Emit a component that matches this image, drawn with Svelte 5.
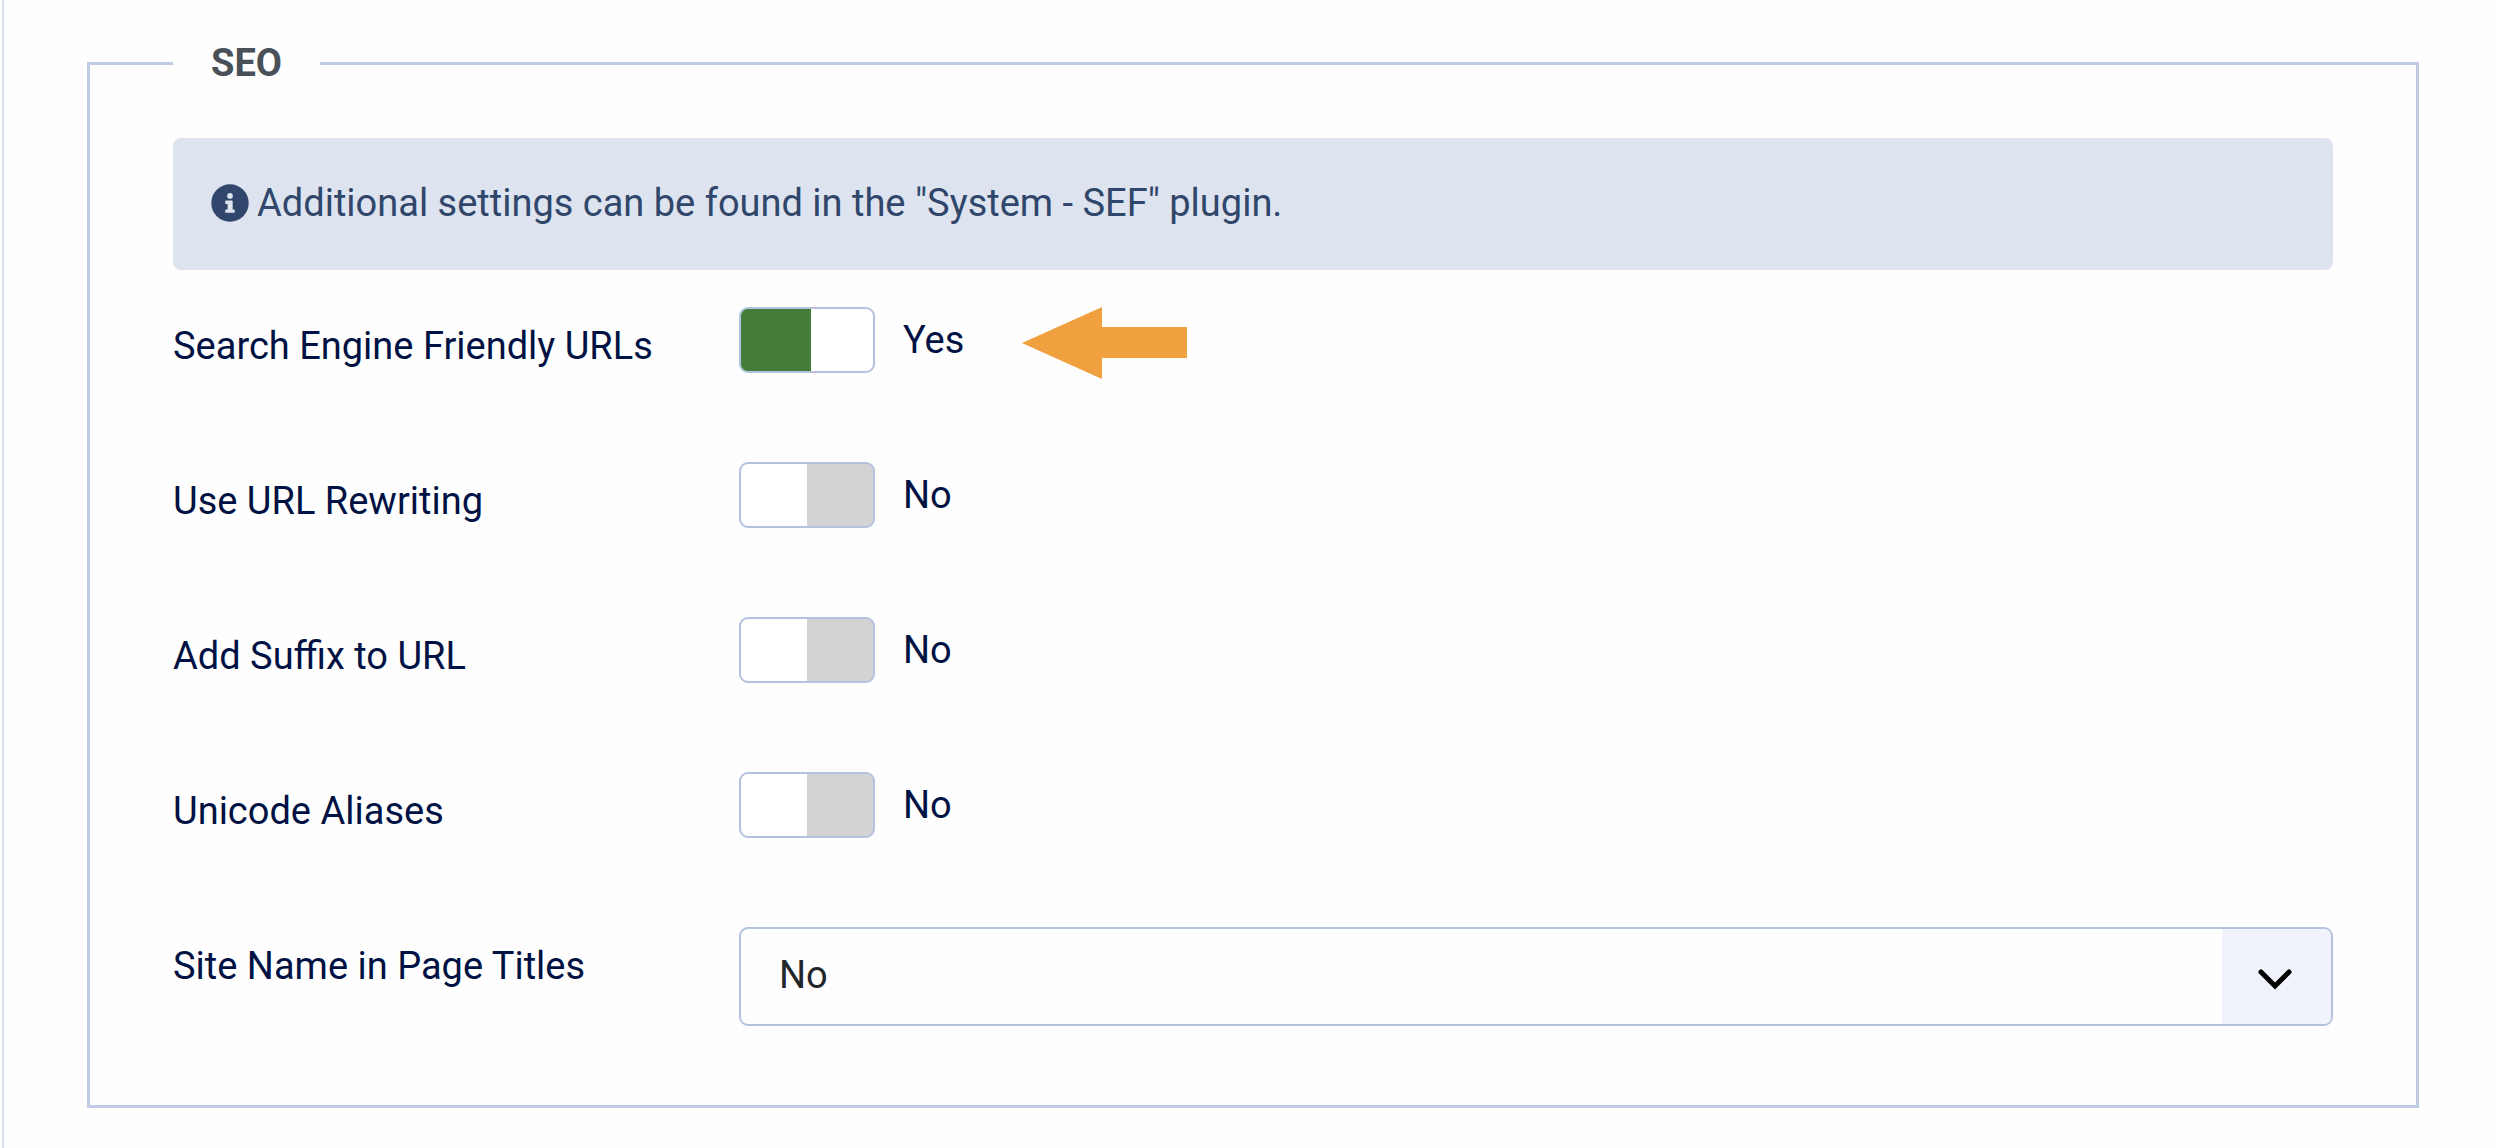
<script>
let switches = [
  { id: 'sef', label: 'Search Engine Friendly URLs', on: true, highlight: true },
  { id: 'sef_rewrite', label: 'Use URL Rewriting', on: false },
  { id: 'sef_suffix', label: 'Add Suffix to URL', on: false },
  { id: 'unicodeslugs', label: 'Unicode Aliases', on: false }
];
let sitename = 'No';
</script>

<main>
  <form>
    <fieldset>
      <legend>SEO</legend>
      <div class="alert">
        <svg class="info" viewBox="0 0 512 512" aria-hidden="true">
          <circle cx="256" cy="256" r="252" />
          <circle class="mark" cx="256" cy="160" r="38" />
          <path class="mark" d="M200 222h80q12 0 12 12v108h16q12 0 12 12v22q0 12-12 12H204q-12 0-12-12v-22q0-12 12-12h20v-72h-20q-12 0-12-12v-24q0-12 8-12z" />
        </svg>
        <span>Additional settings can be found in the "System - SEF" plugin.</span>
      </div>

      <div class="rows">
        {#each switches as item}
          <div class="row">
            <label for={item.id}>{item.label}</label>
            <div class="control">
              <input type="checkbox" role="switch" id={item.id} bind:checked={item.on}>
              <output for={item.id}>{item.on ? 'Yes' : 'No'}</output>
              {#if item.highlight}
                <svg class="arrow" viewBox="0 0 165 72" aria-hidden="true">
                  <path d="M0 36L80 0V20H165V51H80V72z" />
                </svg>
              {/if}
            </div>
          </div>
        {/each}

        <div class="row">
          <label for="sitename_pagetitles">Site Name in Page Titles</label>
          <div class="select">
            <select id="sitename_pagetitles" bind:value={sitename}>
              <option>No</option>
              <option>Before</option>
              <option>After</option>
            </select>
            <div class="caret">
              <svg viewBox="0 0 36 24" aria-hidden="true">
                <path d="M4 5L18 19L32 5" />
              </svg>
            </div>
          </div>
        </div>
      </div>
    </fieldset>
  </form>
</main>

<style>
:global(body) {
  margin: 0;
  background: #fefefe;
}
main {
  box-sizing: border-box;
  min-height: 100vh;
  margin-left: 2px;
  padding: 35px 81px 41px 83px;
  border-left: 2px solid #d9e1ef;
  color: #001243;
  font-family: Roboto, sans-serif;
  font-size: 38px;
  line-height: 48px;
}
fieldset {
  min-width: 0;
  margin: 0;
  padding: 47px 83px 79px;
  border: 3px solid #c0cce3;
}
legend {
  padding: 4px 38px;
  color: #495057;
  font-weight: 700;
}
.alert {
  display: flex;
  align-items: center;
  gap: 8px;
  margin-bottom: 37px;
  padding: 41px 38px 43px;
  border-radius: 8px;
  background: #dde3ef;
  color: #30466a;
}
.info {
  flex: none;
  width: 38px;
  height: 38px;
  fill: #30466a;
}
.info .mark {
  fill: #dde3ef;
}
.rows {
  display: grid;
  gap: 89px;
}
.row {
  display: grid;
  grid-template-columns: 566px 1fr;
  align-items: start;
}
label {
  padding-top: 15px;
}
.control {
  display: flex;
  align-items: center;
  height: 66px;
}
input {
  appearance: none;
  box-sizing: border-box;
  width: 136px;
  height: 66px;
  margin: 0 28px 0 0;
  border: 2px solid #b4c2de;
  border-radius: 9px;
  background: linear-gradient(to right, #fff 50%, #d3d3d3 50%);
}
input:checked {
  background: linear-gradient(to right, #457d3a 53%, #fff 53%);
}
.arrow {
  width: 165px;
  height: 72px;
  margin: 5px 0 0 58px;
  fill: #f0a03f;
}
.select {
  position: relative;
}
select {
  appearance: none;
  display: block;
  box-sizing: border-box;
  width: 100%;
  height: 99px;
  padding: 0 148px 4px 38px;
  border: 2px solid #b4c2de;
  border-radius: 9px;
  background: #fefefe;
  color: #22262a;
  font: inherit;
}
.caret {
  position: absolute;
  top: 2px;
  right: 2px;
  bottom: 2px;
  box-sizing: border-box;
  width: 109px;
  padding: 4px 4px 0 0;
  display: flex;
  align-items: center;
  justify-content: center;
  border-radius: 0 7px 7px 0;
  background: #f0f3fb;
  pointer-events: none;
}
.caret svg {
  width: 36px;
  height: 24px;
  fill: none;
  stroke: #000;
  stroke-width: 5;
  stroke-linecap: round;
}
</style>
